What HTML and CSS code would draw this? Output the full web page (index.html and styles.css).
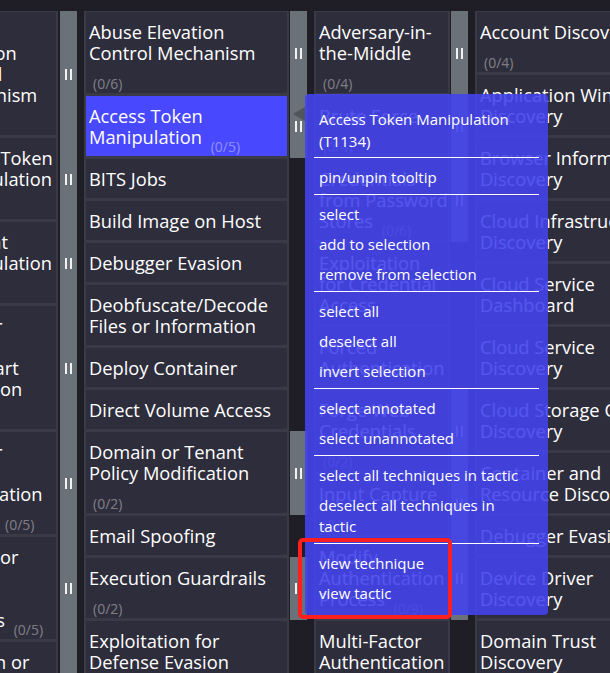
FILE: index.html
```html
<!DOCTYPE html>
<html>
<head>
<meta charset="utf-8">
<link rel="stylesheet" href="styles.css">
</head>
<body>
<div class="matrix">
  <div class="tactic ta">
    <div class="row"><div class="cell">Abuse Elevation Control Mechanism <span class="cnt">(0/6)</span></div><div class="side on"><i class="grip"></i></div></div>
    <div class="row"><div class="cell">Access Token Manipulation <span class="cnt">(0/5)</span></div><div class="side on"><i class="grip"></i></div></div>
    <div class="row"><div class="cell">Account Manipulation <span class="cnt">(0/7)</span></div><div class="side on"><i class="grip"></i></div></div>
    <div class="row"><div class="cell">Boot or Logon Autostart Execution <span class="cnt">(0/14)</span></div><div class="side on"><i class="grip"></i></div></div>
    <div class="row"><div class="cell">Boot or Logon Initialization Scripts <span class="cnt">(0/5)</span></div><div class="side on"><i class="grip"></i></div></div>
    <div class="row"><div class="cell">Create or Modify System Process <span class="cnt">(0/5)</span></div><div class="side on"><i class="grip"></i></div></div>
    <div class="row"><div class="cell">Domain or Tenant Policy Modification <span class="cnt">(0/2)</span></div><div class="side on"><i class="grip"></i></div></div>
  </div>
  <div class="tactic tb">
    <div class="row"><div class="cell">Abuse Elevation Control Mechanism <span class="cnt">(0/6)</span></div><div class="side on"><i class="grip"></i></div></div>
    <div class="row"><div class="cell sel">Access Token Manipulation <span class="cnt">(0/5)</span></div><div class="side on"><i class="grip"></i></div></div>
    <div class="row"><div class="cell">BITS Jobs</div><div class="side"></div></div>
    <div class="row"><div class="cell">Build Image on Host</div><div class="side"></div></div>
    <div class="row"><div class="cell">Debugger Evasion</div><div class="side"></div></div>
    <div class="row"><div class="cell">Deobfuscate/Decode Files or Information</div><div class="side"></div></div>
    <div class="row"><div class="cell">Deploy Container</div><div class="side"></div></div>
    <div class="row"><div class="cell">Direct Volume Access</div><div class="side"></div></div>
    <div class="row"><div class="cell">Domain or Tenant Policy Modification <span class="cnt">(0/2)</span></div><div class="side on"><i class="grip"></i></div></div>
    <div class="row"><div class="cell">Email Spoofing</div><div class="side"></div></div>
    <div class="row"><div class="cell">Execution Guardrails <span class="cnt">(0/2)</span></div><div class="side on"><i class="grip"></i></div></div>
    <div class="row"><div class="cell">Exploitation for Defense Evasion</div><div class="side"></div></div>
  </div>
  <div class="tactic tc">
    <div class="row"><div class="cell">Adversary-in-the-Middle <span class="cnt">(0/4)</span></div><div class="side on"><i class="grip"></i></div></div>
    <div class="row"><div class="cell">Brute Force <span class="cnt">(0/4)</span></div><div class="side on"><i class="grip"></i></div></div>
    <div class="row"><div class="cell nw">Credentials<br>from Password<br>Stores <span class="cnt">(0/6)</span></div><div class="side on"><i class="grip"></i></div></div>
    <div class="row"><div class="cell">Exploitation<br>for Credential Access</div><div class="side"></div></div>
    <div class="row"><div class="cell">Forced Authentication</div><div class="side"></div></div>
    <div class="row"><div class="cell">Forge Web Credentials <span class="cnt">(0/2)</span></div><div class="side on"><i class="grip"></i></div></div>
    <div class="row"><div class="cell">Input Capture <span class="cnt">(0/4)</span></div><div class="side on"><i class="grip"></i></div></div>
    <div class="row"><div class="cell">Modify Authentication Process <span class="cnt">(0/9)</span></div><div class="side on"><i class="grip"></i></div></div>
    <div class="row"><div class="cell">Multi-Factor Authentication</div><div class="side"></div></div>
  </div>
  <div class="tactic td">
    <div class="row"><div class="cell">Account Discovery <span class="cnt">(0/4)</span></div><div class="side on"><i class="grip"></i></div></div>
    <div class="row"><div class="cell">Application Window Discovery</div><div class="side"></div></div>
    <div class="row"><div class="cell">Browser Information Discovery</div><div class="side"></div></div>
    <div class="row"><div class="cell">Cloud Infrastructure Discovery</div><div class="side"></div></div>
    <div class="row"><div class="cell">Cloud Service Dashboard</div><div class="side"></div></div>
    <div class="row"><div class="cell">Cloud Service Discovery</div><div class="side"></div></div>
    <div class="row"><div class="cell">Cloud Storage Object Discovery</div><div class="side"></div></div>
    <div class="row"><div class="cell">Container and Resource Discovery</div><div class="side"></div></div>
    <div class="row"><div class="cell">Debugger Evasion</div><div class="side"></div></div>
    <div class="row"><div class="cell">Device Driver Discovery</div><div class="side"></div></div>
    <div class="row"><div class="cell">Domain Trust Discovery</div><div class="side"></div></div>
  </div>
</div>

<div class="arrow"></div>
<div class="menu">
  <div class="title">Access Token Manipulation (T1134)</div>
  <hr>
  <div class="item">pin/unpin tooltip</div>
  <hr>
  <div class="item">select</div>
  <div class="item">add to selection</div>
  <div class="item">remove from selection</div>
  <hr>
  <div class="item">select all</div>
  <div class="item">deselect all</div>
  <div class="item">invert selection</div>
  <hr>
  <div class="item">select annotated</div>
  <div class="item">select unannotated</div>
  <hr>
  <div class="item">select all techniques in tactic</div>
  <div class="item">deselect all techniques in tactic</div>
  <hr>
  <div class="item">view technique</div>
  <div class="item">view tactic</div>
</div>
<div class="annot"></div>
</body>
</html>
```

FILE: styles.css
```css
html, body {
  margin: 0;
  padding: 0;
}
body {
  width: 610px;
  height: 673px;
  overflow: hidden;
  position: relative;
  background: #1f1e27;
  font-family: "Open Sans", "Noto Sans", sans-serif;
  color: #fff;
}
.matrix {
  display: flex;
  align-items: flex-start;
  gap: 7px;
  margin-left: -66px;
  padding-top: 11px;
}
.tactic {
  display: flex;
  flex-direction: column;
  flex: none;
}
.row {
  display: flex;
}
.cell {
  box-sizing: border-box;
  background: #2e2d3b;
  border: 2px solid #3a3946;
  border-top-width: 1px;
  padding: 9px 2px 9px 3px;
  font-size: 18.3px;
  line-height: 21px;
  color: #fff;
}
.ta .cell { width: 124px; }
.tb .cell { width: 205px; }
.tc .cell { width: 136px; }
.td .cell { width: 194px; }
.cell.nw {
  white-space: nowrap;
}
.cell.sel {
  background: #4848ff;
}
.cnt {
  font-size: 14px;
  line-height: 0;
  color: rgba(255, 255, 255, 0.4);
  margin-left: 4px;
  vertical-align: -8px;
  white-space: nowrap;
}
.side {
  width: 17px;
  margin-left: 1px;
  display: flex;
  align-items: center;
  justify-content: center;
}
.ta .side { margin-left: 2px; }
.side.on {
  background: #6b7178;
}
.grip {
  display: block;
  width: 3px;
  height: 11px;
  border-left: 2px solid #f2f2f2;
  border-right: 2px solid #f2f2f2;
}
.menu {
  position: absolute;
  left: 305px;
  top: 94px;
  width: 243px;
  box-sizing: border-box;
  padding-bottom: 6px;
  background: rgba(68, 68, 236, 0.9);
  border-radius: 4px;
  font-size: 15px;
  line-height: 21px;
  color: #fff;
}
.menu .title {
  padding: 14px 14px 4px;
  line-height: 22px;
}
.menu hr {
  border: 0;
  height: 1px;
  background: #fff;
  margin: 1px 9px 5px;
}
.menu .item {
  padding: 4px 14px 5px;
}
.arrow {
  position: absolute;
  left: 293px;
  top: 107px;
  width: 0;
  height: 0;
  border-right: 12px solid #50545b;
  border-top: 7px solid transparent;
  border-bottom: 7px solid transparent;
}
.annot {
  position: absolute;
  left: 298px;
  top: 538px;
  width: 154px;
  height: 81px;
  box-sizing: border-box;
  border: 4px solid #ff1f1f;
  border-radius: 5px;
}
```
